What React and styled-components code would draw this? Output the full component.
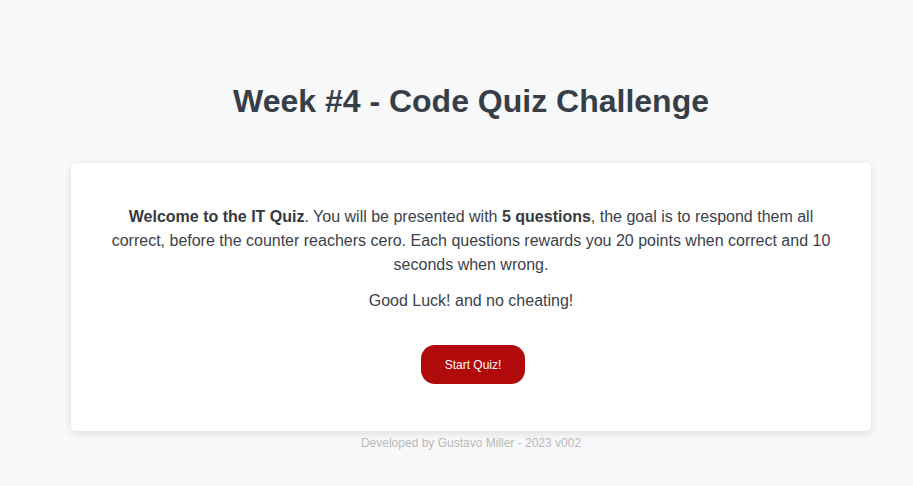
import styled, { createGlobalStyle } from "styled-components";

const GlobalStyle = createGlobalStyle`
  html, body {
    margin: 0;
    padding: 0;
    background: #f8f9fb;
    font-family: "Liberation Sans", Arial, sans-serif;
  }
`;

const Page = styled.main`
  min-height: 486px;
  display: flex;
  flex-direction: column;
  align-items: center;
  padding: 83px 0 0 29px;
  box-sizing: border-box;
`;

const Title = styled.h1`
  margin: 0 0 43px;
  font-size: 32px;
  line-height: 37px;
  font-weight: 700;
  color: #363f48;
`;

const Card = styled.section`
  width: 800px;
  box-sizing: border-box;
  background: #fff;
  border-radius: 5px;
  box-shadow: 0 2px 8px rgba(0, 0, 0, 0.12);
  padding: 42px 40px 47px;
  display: flex;
  flex-direction: column;
  align-items: center;
  text-align: center;
  color: #3b424a;
`;

const Text = styled.p`
  margin: 0 0 ${(p) => p.$gap || 0}px;
  font-size: 16px;
  line-height: 24px;

  b {
    color: #343a40;
  }
`;

const StartButton = styled.button`
  width: 104px;
  height: 39px;
  margin-left: 4px;
  border: none;
  border-radius: 14px;
  background: #b00a0a;
  color: #fff;
  font-family: inherit;
  font-size: 12px;
  cursor: pointer;
`;

const Footer = styled.footer`
  margin-top: 5px;
  font-size: 12px;
  line-height: 14px;
  color: #b8b8b8;
`;

export default function App() {
  return (
    <>
      <GlobalStyle />
      <Page>
        <Title>Week #4 - Code Quiz Challenge</Title>
        <Card>
          <Text $gap={12}>
            <b>Welcome to the IT Quiz</b>. You will be presented with <b>5 questions</b>, the goal is to respond them all
            correct, before the counter reachers cero. Each questions rewards you 20 points when correct and 10
            seconds when wrong.
          </Text>
          <Text $gap={32}>Good Luck! and no cheating!</Text>
          <StartButton>Start Quiz!</StartButton>
        </Card>
        <Footer>Developed by Gustavo Miller - 2023 v002</Footer>
      </Page>
    </>
  );
}
